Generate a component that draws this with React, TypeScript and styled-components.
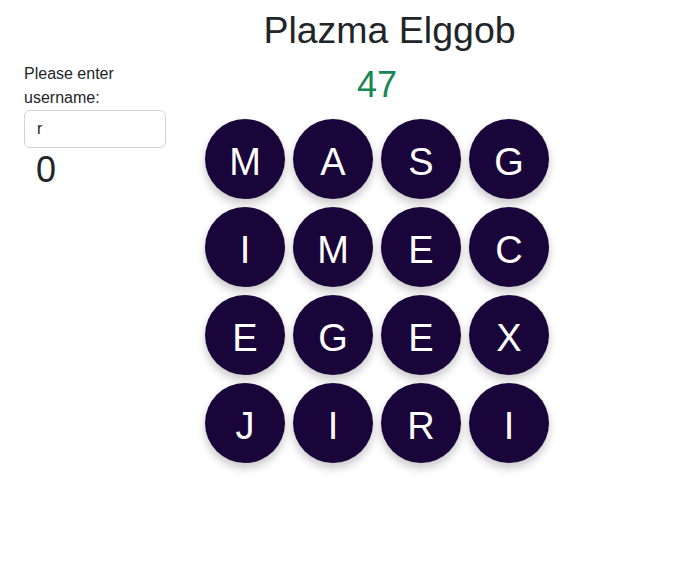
import styled, { createGlobalStyle } from "styled-components";

const GlobalStyle = createGlobalStyle`
  body {
    margin: 0;
    background: #ffffff;
    color: #212529;
    font-family: "Liberation Sans", Arial, sans-serif;
  }
`;

const Page = styled.div`
  display: flex;
  align-items: flex-start;
  padding: 0 0 40px 24px;
`;

const Sidebar = styled.div`
  width: 142px;
  margin-top: 62px;
  display: flex;
  flex-direction: column;
`;

const Label = styled.label`
  font-size: 16px;
  line-height: 24px;
  color: #212529;
`;

const UserInput = styled.input`
  box-sizing: border-box;
  width: 142px;
  height: 38px;
  padding: 6px 12px;
  font-family: "Liberation Sans", Arial, sans-serif;
  font-size: 16px;
  color: #212529;
  border: 1px solid #ced4da;
  border-radius: 6px;
  background: #fff;
  outline: none;
`;

const Score = styled.div`
  font-size: 36px;
  line-height: 1.2;
  padding-left: 12px;
`;

const Main = styled.div`
  width: 422px;
  display: flex;
  flex-direction: column;
  align-items: center;
  padding-bottom: 30px;
`;

const Title = styled.h1`
  margin: 8px 0 0;
  padding-left: 25px;
  font-size: 37.5px;
  line-height: 1.2;
  font-weight: 400;
  color: #212529;
`;

const Timer = styled.div`
  margin-top: 10px;
  font-size: 36px;
  line-height: 1.2;
  color: #198754;
`;

const Board = styled.div`
  margin-top: 13px;
  display: grid;
  grid-template-columns: repeat(4, 80px);
  gap: 8px;
`;

const Die = styled.div`
  width: 80px;
  height: 80px;
  border-radius: 50%;
  background: #1a053a;
  color: #fff;
  display: flex;
  align-items: center;
  justify-content: center;
  font-size: 38px;
  padding-top: 6px;
  box-sizing: border-box;
  box-shadow: 0 5px 10px rgba(0, 0, 0, 0.22);
  user-select: none;
`;

const letters = "MASGIMECEGEXJIRI".split("");

export default function App() {
  return (
    <>
      <GlobalStyle />
      <Page>
        <Sidebar>
          <Label htmlFor="username">Please enter username:</Label>
          <UserInput id="username" defaultValue="r" />
          <Score>0</Score>
        </Sidebar>
        <Main>
          <Title>Plazma Elggob</Title>
          <Timer>47</Timer>
          <Board>
            {letters.map((l, i) => (
              <Die key={i}>{l}</Die>
            ))}
          </Board>
        </Main>
      </Page>
    </>
  );
}
